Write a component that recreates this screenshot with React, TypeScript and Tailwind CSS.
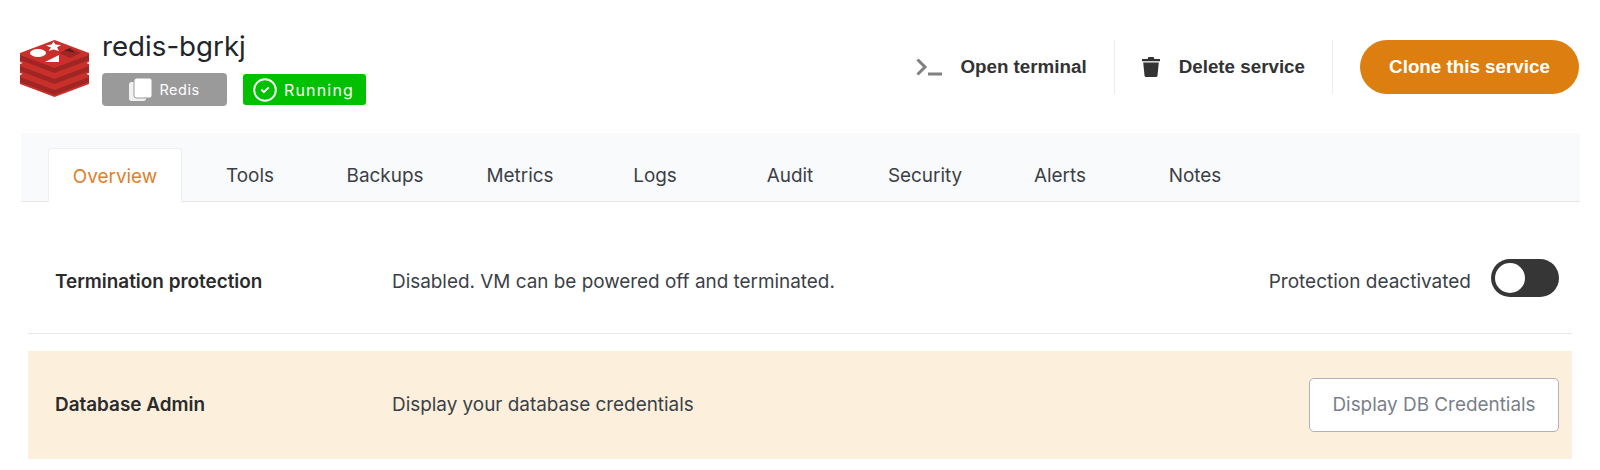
import { CircleCheck } from 'lucide-react'

const tabs = ['Overview', 'Tools', 'Backups', 'Metrics', 'Logs', 'Audit', 'Security', 'Alerts', 'Notes']

function RedisLogo() {
  return (
    <svg width="69" height="57" viewBox="0 0 69 57" className="shrink-0">
      {/* stacked plates, bottom first: top face then darker side */}
      <path d="M0 35 L34.5 22 L69 35 V44 L34.5 57 L0 44 Z" fill="#c9302b" />
      <path d="M0 37 L34.5 50 L69 37 V42 L34.5 55 L0 42 Z" fill="#a02623" />
      <path d="M0 24 L34.5 11 L69 24 V33 L34.5 46 L0 33 Z" fill="#c9302b" />
      <path d="M0 26 L34.5 39 L69 26 V31 L34.5 44 L0 31 Z" fill="#a02623" />
      <path d="M0 13 L34.5 0 L69 13 V22 L34.5 35 L0 22 Z" fill="#c9302b" />
      <path d="M0 15 L34.5 28 L69 15 V20 L34.5 33 L0 20 Z" fill="#a02623" />
      <ellipse cx="18" cy="13" rx="8" ry="4" fill="#fff" />
      <path d="M33.5 1.5 L35.5 4.5 L41 5 L37 7.5 L39 11 L33.5 9.5 L28.5 11 L31 7.5 L26 5.5 L31.5 4.5 Z" fill="#fff" />
      <path d="M25 22 L39 15 L39 22 Z" fill="#fff" />
      <path d="M39 13 L50 8 L61 13 L50 18 Z" fill="#a02623" />
      <path d="M44 10.5 L50 8 L55 13 Z" fill="#621b1c" />
    </svg>
  )
}

function CopyIcon() {
  return (
    <svg width="23" height="23" viewBox="0 0 23 23" className="shrink-0">
      <rect x="0" y="4" width="17" height="19" rx="2.5" fill="#fff" opacity="0.85" />
      <rect x="5" y="0" width="18" height="20" rx="2.5" fill="#fff" stroke="#9a9a9a" strokeWidth="1" />
    </svg>
  )
}

function TerminalIcon() {
  return (
    <svg width="26" height="18" viewBox="0 0 26 18" className="shrink-0">
      <path d="M1.5 1.5 L9 9 L1.5 16.5" fill="none" stroke="#808080" strokeWidth="3" />
      <rect x="12" y="14.5" width="14" height="3" fill="#808080" />
    </svg>
  )
}

function TrashIcon() {
  return (
    <svg width="18" height="20" viewBox="0 0 18 20" className="shrink-0">
      <path d="M6.5 0 H11.5 L12.5 2 H18 V4.2 H0 V2 H5.5 Z" fill="#333" />
      <path d="M1.2 5.5 H16.8 L15.5 18.5 Q15.4 20 14 20 H4 Q2.6 20 2.5 18.5 Z" fill="#333" />
    </svg>
  )
}

export default function App() {
  return (
    <div className="h-[470px] w-[1600px] overflow-hidden bg-white font-['Inter',sans-serif] text-[#333]">
      {/* Header */}
      <header className="ml-5 mr-[21px] flex h-[133px] items-start justify-between pt-10">
        <div className="flex items-start">
          <RedisLogo />
          <div className="ml-[13px] -mt-[14px]">
            <h1 className="text-[27.7px] leading-[40px] text-[#212529]">redis-bgrkj</h1>
            <div className="mt-[7px] flex items-center gap-4">
              <span className="flex h-[33px] w-[125px] items-center justify-center gap-[7px] rounded-[4px] bg-[#9a9a9a] text-[14.5px] tracking-[0.5px] text-white">
                <CopyIcon />
                Redis
              </span>
              <span className="flex h-[31px] w-[123px] items-center justify-center gap-[6px] rounded-[3px] bg-[#00c000] pr-[3px] text-[16px] tracking-[1.2px] text-white">
                <CircleCheck className="h-[26px] w-[26px]" strokeWidth={1.8} />
                Running
              </span>
            </div>
          </div>
        </div>

        <div className="flex h-[54px] items-center font-['Liberation_Sans',Arial,sans-serif] text-[18.8px] font-bold">
          <div className="flex h-full items-center gap-[18px] border-r border-[#eee] pr-[27px]">
            <TerminalIcon />
            <span>Open terminal</span>
          </div>
          <div className="flex h-full items-center gap-[19px] border-r border-[#eee] pl-[27px] pr-[27px]">
            <TrashIcon />
            <span>Delete service</span>
          </div>
          <button className="ml-[27px] h-full w-[219px] rounded-full bg-[#dd7f10] text-white">Clone this service</button>
        </div>
      </header>

      {/* Tabs */}
      <nav className="ml-[21px] mr-5 flex h-[69px] items-end border-b border-[#e6e7ea] bg-[#f9fafc] pl-[27px]">
        {tabs.map((tab, index) => (
          <div
            key={tab}
            className={
              index === 0
                ? '-mb-px mr-px flex h-[54px] w-[134px] items-center justify-center rounded-t-[3px] border border-b-0 border-[#eeeff2] bg-white pt-[3px] text-[18.9px] text-[#e07f2a]'
                : '-mb-px mr-px flex h-[54px] w-[134px] items-center justify-center pt-[3px] text-[18.9px] text-[#3b3f46]'
            }
          >
            {tab}
          </div>
        ))}
      </nav>

      {/* Rows */}
      <section className="mx-7">
        <div className="flex h-[132px] items-center border-b border-[#e8e8ea] pl-[27px] pr-[13px] pt-[29px]">
          <div className="w-[337px] text-[18.9px] font-semibold text-[#2b2b2b]">Termination protection</div>
          <div className="flex-1 text-[18.9px] text-[#3b3f46]">Disabled. VM can be powered off and terminated.</div>
          <div className="flex items-center gap-5">
            <span className="text-[19px] text-[#3b3f46]">Protection deactivated</span>
            <div className="-mt-[9px] flex h-[38px] w-[68px] items-center rounded-full bg-[#363636] pl-[4px]">
              <div className="h-[30px] w-[30px] rounded-full bg-white" />
            </div>
          </div>
        </div>

        <div className="mt-[17px] flex h-[108px] items-center bg-[#fcf0dd] pl-[27px] pr-[13px]">
          <div className="w-[337px] text-[18.9px] font-semibold text-[#2b2b2b]">Database Admin</div>
          <div className="flex-1 text-[18.9px] text-[#3b3f46]">Display your database credentials</div>
          <button className="h-[54px] w-[250px] rounded-[5px] border border-[#b0b0b8] bg-white text-[18.9px] text-[#7b7f89]">
            Display DB Credentials
          </button>
        </div>
      </section>
    </div>
  )
}
